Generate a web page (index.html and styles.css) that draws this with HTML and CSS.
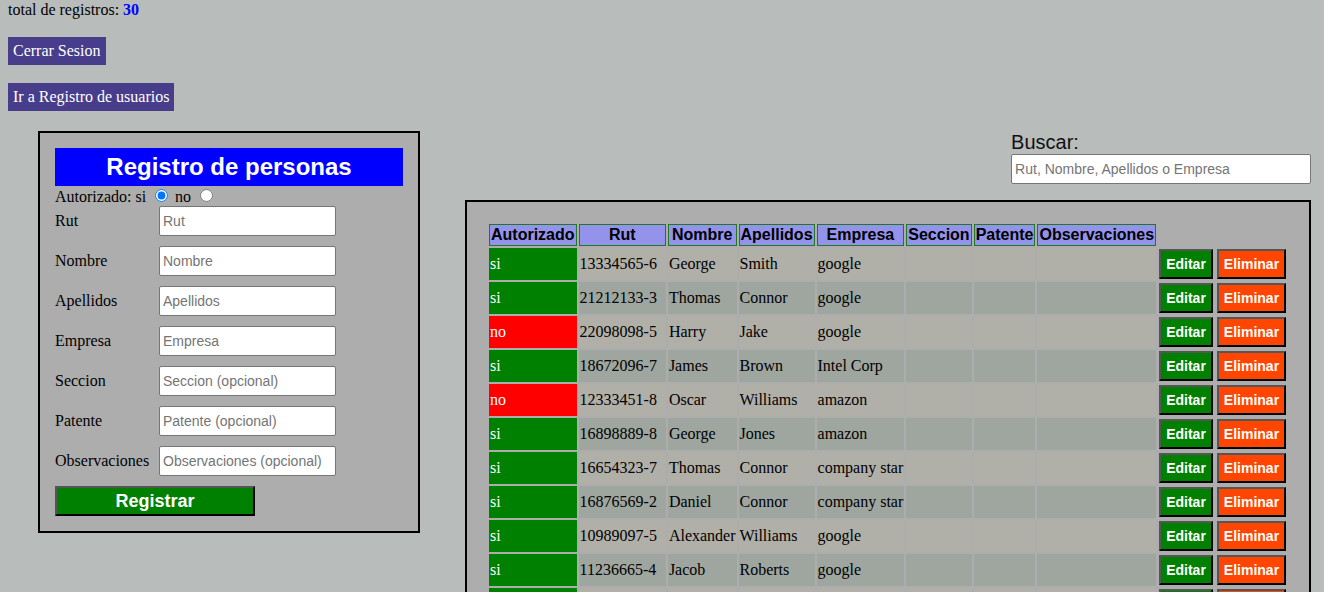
FILE: index.html
```html
<!DOCTYPE html>
<html lang="es">
<head>
<meta charset="utf-8">
<title>Registro de personas</title>
<link rel="stylesheet" href="styles.css">
</head>
<body>
<div class="page">
  <p class="total">total de registros: <b>30</b></p>
  <button class="top-btn">Cerrar Sesion</button>
  <button class="top-btn">Ir a Registro de usuarios</button>

  <div class="main">
    <form class="form-box">
      <h2 class="form-title">Registro de personas</h2>
      <div class="auth">Autorizado: si <input type="radio" name="aut" checked> no <input type="radio" name="aut"></div>
      <div class="fields">
        <label>Rut</label><input type="text" placeholder="Rut">
        <label>Nombre</label><input type="text" placeholder="Nombre">
        <label>Apellidos</label><input type="text" placeholder="Apellidos">
        <label>Empresa</label><input type="text" placeholder="Empresa">
        <label>Seccion</label><input type="text" placeholder="Seccion (opcional)">
        <label>Patente</label><input type="text" placeholder="Patente (opcional)">
        <label>Observaciones</label><input type="text" placeholder="Observaciones (opcional)">
      </div>
      <button type="button" class="btn-registrar">Registrar</button>
    </form>

    <div class="right">
      <div class="search">
        <label class="search-label">Buscar:</label>
        <input type="text" class="search-input" placeholder="Rut, Nombre, Apellidos o Empresa">
      </div>
      <div class="table-box">
        <table class="grid">
          <thead>
            <tr><th>Autorizado</th><th>Rut</th><th>Nombre</th><th>Apellidos</th><th>Empresa</th><th>Seccion</th><th>Patente</th><th>Observaciones</th></tr>
          </thead>
          <tbody>
            <tr class="odd"><td class="si">si</td><td class="rut">13334565-6</td><td>George</td><td>Smith</td><td>google</td><td></td><td></td><td></td><td class="act"><button class="b-edit">Editar</button></td><td class="act"><button class="b-del">Eliminar</button></td></tr>
            <tr class="even"><td class="si">si</td><td class="rut">21212133-3</td><td>Thomas</td><td>Connor</td><td>google</td><td></td><td></td><td></td><td class="act"><button class="b-edit">Editar</button></td><td class="act"><button class="b-del">Eliminar</button></td></tr>
            <tr class="odd"><td class="no">no</td><td class="rut">22098098-5</td><td>Harry</td><td>Jake</td><td>google</td><td></td><td></td><td></td><td class="act"><button class="b-edit">Editar</button></td><td class="act"><button class="b-del">Eliminar</button></td></tr>
            <tr class="even"><td class="si">si</td><td class="rut">18672096-7</td><td>James</td><td>Brown</td><td>Intel Corp</td><td></td><td></td><td></td><td class="act"><button class="b-edit">Editar</button></td><td class="act"><button class="b-del">Eliminar</button></td></tr>
            <tr class="odd"><td class="no">no</td><td class="rut">12333451-8</td><td>Oscar</td><td>Williams</td><td>amazon</td><td></td><td></td><td></td><td class="act"><button class="b-edit">Editar</button></td><td class="act"><button class="b-del">Eliminar</button></td></tr>
            <tr class="even"><td class="si">si</td><td class="rut">16898889-8</td><td>George</td><td>Jones</td><td>amazon</td><td></td><td></td><td></td><td class="act"><button class="b-edit">Editar</button></td><td class="act"><button class="b-del">Eliminar</button></td></tr>
            <tr class="odd"><td class="si">si</td><td class="rut">16654323-7</td><td>Thomas</td><td>Connor</td><td>company star</td><td></td><td></td><td></td><td class="act"><button class="b-edit">Editar</button></td><td class="act"><button class="b-del">Eliminar</button></td></tr>
            <tr class="even"><td class="si">si</td><td class="rut">16876569-2</td><td>Daniel</td><td>Connor</td><td>company star</td><td></td><td></td><td></td><td class="act"><button class="b-edit">Editar</button></td><td class="act"><button class="b-del">Eliminar</button></td></tr>
            <tr class="odd"><td class="si">si</td><td class="rut">10989097-5</td><td>Alexander</td><td>Williams</td><td>google</td><td></td><td></td><td></td><td class="act"><button class="b-edit">Editar</button></td><td class="act"><button class="b-del">Eliminar</button></td></tr>
            <tr class="even"><td class="si">si</td><td class="rut">11236665-4</td><td>Jacob</td><td>Roberts</td><td>google</td><td></td><td></td><td></td><td class="act"><button class="b-edit">Editar</button></td><td class="act"><button class="b-del">Eliminar</button></td></tr>
            <tr class="odd"><td class="si">si</td><td class="rut">15432123-9</td><td>Michael</td><td>Taylor</td><td>amazon</td><td></td><td></td><td></td><td class="act"><button class="b-edit">Editar</button></td><td class="act"><button class="b-del">Eliminar</button></td></tr>
          </tbody>
        </table>
      </div>
    </div>
  </div>
</div>
</body>
</html>
```

FILE: styles.css
```css
body {
  margin: 0;
  background: #b8bcbb;
  font-family: "Liberation Serif", "Times New Roman", serif;
  font-size: 16px;
  color: #000;
}

.page {
  padding: 0 8px;
}

.total {
  margin: 0;
  line-height: 19px;
}

.total b {
  color: #0000ff;
}

.top-btn {
  display: block;
  margin-top: 18px;
  background: #483d8b;
  color: #fff;
  border: 0;
  padding: 5px 5px;
  font: 16px/18px "Liberation Serif", "Times New Roman", serif;
}

.main {
  display: flex;
  align-items: flex-start;
  gap: 45px;
  margin-top: 20px;
  padding-left: 30px;
}

.form-box {
  width: 382px;
  box-sizing: border-box;
  margin: 0;
  border: 2px solid #000;
  background: #adadad;
  padding: 15px;
}

.form-title {
  margin: 0;
  background: #0000ff;
  color: #fff;
  font: bold 24px/28px "Liberation Sans", Arial, sans-serif;
  text-align: center;
  padding: 5px 0;
}

.auth {
  height: 20px;
  line-height: 20px;
}

.auth input {
  margin: 3px 3px 0 5px;
}

.fields {
  display: grid;
  grid-template-columns: 104px 177px;
  row-gap: 10px;
  align-items: baseline;
}

.fields input,
.search-input {
  height: 30px;
  box-sizing: border-box;
  border: 1px solid #767676;
  border-radius: 2px;
  padding: 0 3px;
  margin: 0;
  font: 14px "Liberation Sans", Arial, sans-serif;
  background: #fff;
}

.fields input::placeholder,
.search-input::placeholder {
  color: #757575;
}

.btn-registrar {
  display: block;
  margin-top: 10px;
  width: 200px;
  height: 30px;
  background: #008000;
  color: #fff;
  font: bold 18px "Liberation Sans", Arial, sans-serif;
  border: 2px solid;
  border-color: #555 #000 #000 #555;
  padding: 0;
}

.right {
  display: flex;
  flex-direction: column;
  align-items: flex-end;
}

.search {
  width: 300px;
}

.search-label {
  display: block;
  font: 20px "Liberation Sans", Arial, sans-serif;
  color: #111;
}

.search-input {
  display: block;
  width: 300px;
}

.table-box {
  margin-top: 16px;
  border: 2px solid #000;
  background: #adadad;
  padding: 20px;
}

.grid {
  border-collapse: separate;
  border-spacing: 2px;
}

.grid th {
  border: 1px solid #227722;
  background: #9393ec;
  font: bold 16px "Liberation Sans", Arial, sans-serif;
  padding: 1px;
  color: #000;
}

.grid td {
  padding: 1px;
  white-space: nowrap;
}

.grid td.rut {
  padding-right: 9px;
}

.odd td {
  background: #b0afa8;
}

.even td {
  background: #9ea69f;
}

.grid td.si {
  background: #008000;
  color: #fff;
}

.grid td.no {
  background: #ff0000;
  color: #fff;
}

.grid td.act {
  background: transparent;
}

.b-edit,
.b-del {
  display: block;
  height: 30px;
  padding: 1px 5px;
  border: 2px solid;
  border-color: #555 #000 #000 #555;
  color: #fff;
  font: bold 14px "Liberation Sans", Arial, sans-serif;
}

.b-edit {
  background: #008000;
}

.b-del {
  background: #ff4500;
}
```
